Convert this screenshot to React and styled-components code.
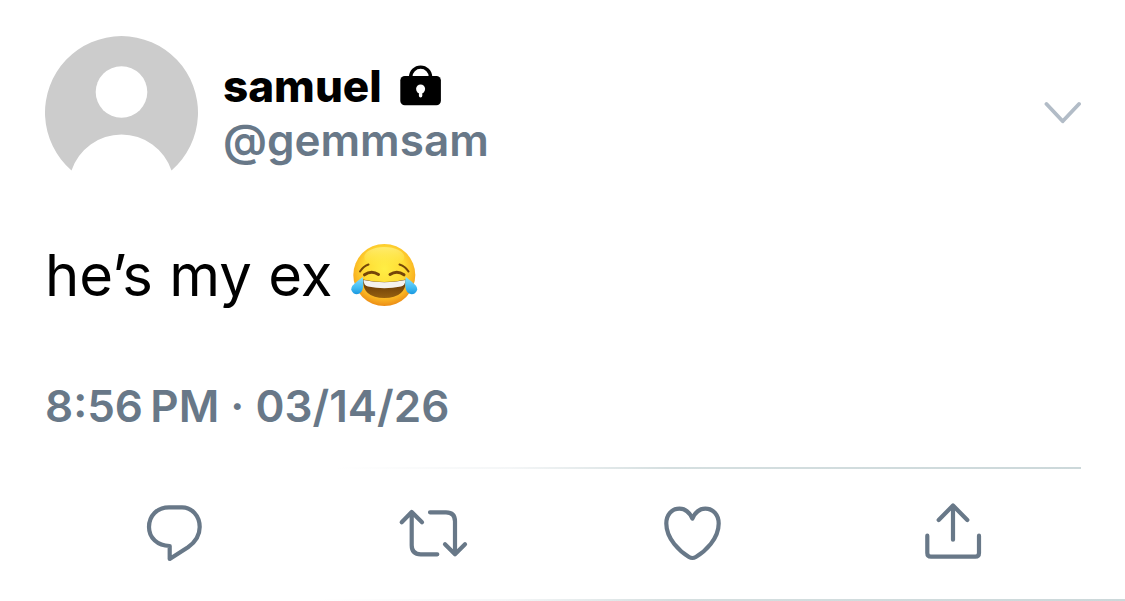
import React from 'react'

// Styled-components:
import styled, { createGlobalStyle } from "styled-components"

function App() {
    return (
        <>
            <GlobalStyle />
            <Tweet>
                <Header>
                    <Avatar />
                    <Author>
                        <Name>
                            samuel
                            <LockIcon />
                        </Name>
                        <Handle href="#profile">@gemmsam</Handle>
                    </Author>
                    <MenuButton type="button" aria-label="More options">
                        <svg width="40" height="24" viewBox="0 0 40 24">
                            <path d="M5.5 3 L21.7 20.3 L38 3" />
                        </svg>
                    </MenuButton>
                </Header>

                <Body>
                    he’s my ex
                    <JoyEmoji />
                </Body>

                <Time>8:56{"\u202f"}PM · 03/14/26</Time>

                <Divider />

                <Actions>
                    <ActionButton type="button" aria-label="Reply">
                        <ActionIcon viewBox="1 0 72 72">
                            <path d="M31.7 50 V63 L50 51.2 C57.5 46 61.7 40 61.7 31 C61.7 19.5 53.5 11.3 44 11.3 H31 C19 11.3 11 20 11 31 C11 42 19.5 49.8 31.7 50 Z" />
                        </ActionIcon>
                    </ActionButton>
                    <ActionButton type="button" aria-label="Retweet">
                        <ActionIcon viewBox="1 0 72 72">
                            <path d="M4.7 26.3 L14.7 16 L25 26.3 M14.7 16 V49.3 Q14.7 58.3 23.7 58.3 H40.3" />
                            <path d="M33 16.3 H49 Q58 16.3 58 25.3 V58.3 M48 48.3 L58 58.3 L68 48.3" />
                        </ActionIcon>
                    </ActionButton>
                    <ActionButton type="button" aria-label="Like">
                        <ActionIcon viewBox="1 0 72 72">
                            <path d="M36.4 22.5 C33.5 16.5 29 12.7 23.5 12.7 C15.5 12.7 10.3 19 10.3 27.5 C10.3 43 24 55.5 33 61 Q36.4 63 39.8 61 C49 55.5 62.7 43 62.7 27.5 C62.7 19 57.3 12.7 49.3 12.7 C43.7 12.7 39.2 16.5 36.4 22.5 Z" />
                        </ActionIcon>
                    </ActionButton>
                    <ActionButton type="button" aria-label="Share">
                        <ActionIcon viewBox="1 0 72 72">
                            <path d="M23.7 24 L38 9.5 L52.3 24 M38 9.5 V43.7" />
                            <path d="M12.3 39.7 V57 Q12.3 60.7 16 60.7 H60.3 Q64 60.7 64 57 V39.7" />
                        </ActionIcon>
                    </ActionButton>
                </Actions>
            </Tweet>
            <Divider />
        </>
    )
}

function Avatar() {
    return (
        <AvatarSvg viewBox="0 0 153 153" role="img" aria-label="samuel">
            <path
                fill="#cccccc"
                d="M26.5 134.5 A76.5 76.5 0 1 1 126.5 134.5 A52.7 52.7 0 0 0 26.5 134.5 Z"
            />
            <circle cx="76.5" cy="56" r="25.8" fill="#ffffff" />
        </AvatarSvg>
    )
}

function LockIcon() {
    return (
        <svg width="42" height="42" viewBox="0 0 42 42" role="img" aria-label="Protected account">
            <path d="M10.7 13 V12 A9.9 9.9 0 0 1 30.5 12 V13" fill="none" stroke="#000000" strokeWidth="3.4" />
            <rect x="0.3" y="11" width="40.6" height="29.2" rx="4.5" />
            <circle cx="20.6" cy="24" r="4.5" fill="#ffffff" />
            <path d="M20.6 25 V30.8" stroke="#ffffff" strokeWidth="3.4" strokeLinecap="round" />
        </svg>
    )
}

function JoyEmoji() {
    return (
        <svg width="68" height="64" viewBox="0 0 68 64" role="img" aria-label="😂">
            <defs>
                <radialGradient id="face" cx="0.5" cy="0.4" r="0.6">
                    <stop offset="0" stopColor="#ffee45" />
                    <stop offset="0.55" stopColor="#ffdb33" />
                    <stop offset="0.82" stopColor="#fab422" />
                    <stop offset="1" stopColor="#ec8d16" />
                </radialGradient>
                <linearGradient id="shine" x1="0" y1="0" x2="0" y2="1">
                    <stop offset="0" stopColor="#fff38a" stopOpacity="0.7" />
                    <stop offset="1" stopColor="#fff04c" stopOpacity="0" />
                </linearGradient>
                <linearGradient id="mouth" x1="0" y1="0" x2="0" y2="1">
                    <stop offset="0" stopColor="#5e3206" />
                    <stop offset="1" stopColor="#97600f" />
                </linearGradient>
                <linearGradient id="tear" x1="0" y1="0" x2="0" y2="1">
                    <stop offset="0" stopColor="#8be0fb" />
                    <stop offset="0.6" stopColor="#43bdf3" />
                    <stop offset="1" stopColor="#1a98e0" />
                </linearGradient>
            </defs>
            <circle cx="34.3" cy="32" r="31" fill="url(#face)" />
            <ellipse cx="34.3" cy="14" rx="20" ry="10" fill="url(#shine)" />
            <g fill="none" stroke="#754608" strokeLinecap="round">
                <path d="M10 28.5 Q13 23.5 18.5 21.5" strokeWidth="2" />
                <path d="M49.5 21.5 Q55.5 23.5 58.5 28.5" strokeWidth="2" />
                <path d="M14.5 31.8 Q21.5 26.8 28.5 31.5" strokeWidth="3" />
                <path d="M40 31.5 Q47 26.8 54 31.8" strokeWidth="3" />
            </g>
            <path d="M13 36.5 Q34.3 41.5 56 36.5 Q56 55 34.3 55 Q12.6 55 13 36.5 Z" fill="url(#mouth)" />
            <path d="M13.5 37 Q34.3 41.7 55.5 37 Q55.3 42.5 51 43.5 Q34.3 47 18 43.5 Q13.5 42.5 13.5 37 Z" fill="#f4f2ee" />
            <path d="M12.7 34 Q14.5 45 11 49.3 Q7.5 52.7 3.5 50.3 Q-0.3 47 2.4 42.8 Q6 39 12.7 34 Z" fill="url(#tear)" />
            <path d="M55.8 34 Q54 45 57.5 49.3 Q61 52.7 65 50.3 Q68.8 47 66 42.8 Q62.5 39 55.8 34 Z" fill="url(#tear)" />
        </svg>
    )
}

export default App

const GlobalStyle = createGlobalStyle`
    * {
        box-sizing: border-box;
    }

    body {
        margin: 0;
        background: #ffffff;
        font-family: Inter, "Liberation Sans", sans-serif;
    }
`

const Tweet = styled.article`
    padding: 36px 44px 0 45px;
`

const Header = styled.header`
    display: flex;
    align-items: center;
`

const AvatarSvg = styled.svg`
    width: 153px;
    height: 153px;
    flex-shrink: 0;
`

const Author = styled.div`
    display: flex;
    flex: 1;
    flex-direction: column;
    margin-left: 25px;
`

const Name = styled.h1`
    display: flex;
    align-items: center;
    gap: 18px;
    margin: 0;
    font-size: 44px;
    font-weight: 800;
    line-height: 54px;
    color: #000000;
`

const Handle = styled.a`
    font-size: 44px;
    font-weight: 600;
    line-height: 54px;
    color: #687888;
    text-decoration: none;
`

const MenuButton = styled.button`
    display: flex;
    padding: 0;
    border: none;
    background: none;
    cursor: pointer;

    > svg {
        fill: none;
        stroke: #b2bcc7;
        stroke-width: 3.8;
        stroke-linecap: round;
        stroke-linejoin: round;
    }
`

const Body = styled.p`
    display: flex;
    align-items: center;
    gap: 18px;
    margin: 48px 0 0;
    font-size: 58px;
    line-height: 76px;
    color: #000000;
`

const Time = styled.time`
    display: block;
    margin: 66px 0 34px;
    font-size: 44px;
    font-weight: 600;
    line-height: 54px;
    color: #687888;
`

const Divider = styled.hr`
    height: 2px;
    margin: 0;
    border: none;
    background: linear-gradient(to right, #ffffff 28%, #f4f6f7 45%, #d5dfe0 60%, #ccd8da 100%);
`

const Actions = styled.div`
    display: grid;
    grid-template-columns: repeat(4, 1fr);
    padding: 27px 0 31px;
`

const ActionButton = styled.button`
    display: flex;
    justify-content: center;
    padding: 0;
    border: none;
    background: none;
    cursor: pointer;
`

const ActionIcon = styled.svg`
    width: 72px;
    height: 72px;
    fill: none;
    stroke: #687888;
    stroke-width: 4.2;
    stroke-linecap: round;
    stroke-linejoin: round;
`
